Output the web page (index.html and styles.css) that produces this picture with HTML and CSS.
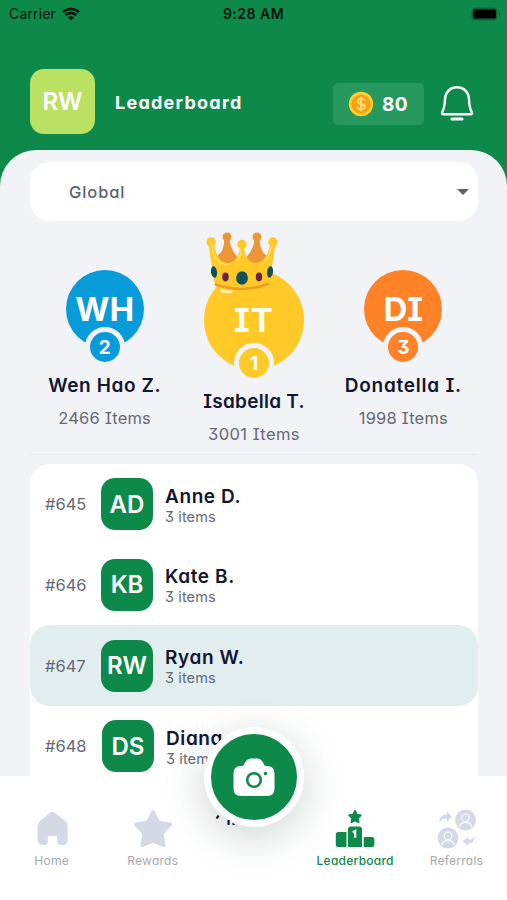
FILE: index.html
```html
<!DOCTYPE html>
<html lang="en">
<head>
<meta charset="utf-8">
<title>Leaderboard</title>
<link rel="stylesheet" href="styles.css">
</head>
<body>
<div class="app">
  <div class="status">
    <div class="carrier"><span class="carrier-name">Carrier</span>
      <svg width="18" height="14" viewBox="0 0 18 14" fill="none" stroke="#04150c" stroke-width="2.5"><path d="M1 5.200C5.500.8 12.500.8 17 5.200M3.800 8.200c3-2.800 7.400-2.800 10.400 0"/><path d="M9 13.500 5.900 10.400c1.800-1.600 4.400-1.600 6.200 0z" fill="#04150c" stroke="none"/></svg>
    </div>
    <span class="time">9:28 AM</span>
    <svg class="battery" width="30" height="14" viewBox="0 0 30 14"><rect x=".5" y=".5" width="26" height="13" rx="4" fill="#08663a"/><rect x="2.500" y="2.500" width="22.500" height="9" rx="2" fill="#000"/><path d="M28 4.700q2 2.300 0 4.600z" fill="#08663a"/></svg>
  </div>
  <header class="header">
    <div class="me">RW</div>
    <h1 class="title">Leaderboard</h1>
    <div class="coins">
      <svg width="26" height="26" viewBox="0 0 26 26"><circle cx="13" cy="13" r="12.200" fill="#ffd02f"/><circle cx="13" cy="13" r="9.600" fill="#ff9f0b"/><path d="M16.500 9.700c-.5-1.500-2-2-3.500-2-2 0-3.500.9-3.500 2.600 0 3.800 7.200 1.700 7.200 5.300 0 1.800-1.500 2.800-3.700 2.800-2 0-3.400-.8-3.900-2.300M13 5.700v14.600" fill="none" stroke="#ffe17a" stroke-width="1.900"/></svg>
      <span class="coin-count">80</span>
    </div>
    <svg class="bell" width="34" height="38" viewBox="0 0 34 38" fill="none" stroke="#fff" stroke-width="2.400" stroke-linecap="round" stroke-linejoin="round"><path d="M17 2.200C10 2.200 5.400 7.200 5 14c-.4 7-.3 8.500-2.700 13-.7 1.400-.2 2.300 1.300 2.300h26.800c1.500 0 2-.9 1.300-2.300C29.300 22.500 29.400 21 29 14 28.600 7.200 24 2.200 17 2.200z"/><path d="M12 34h10" stroke-width="3"/></svg>
  </header>
  <main class="panel">
    <div class="select"><span class="select-text">Global</span><i class="caret"></i></div>
    <section class="podium">
      <div class="place blue">
        <div class="disc">WH<span class="medal">2</span></div>
        <div class="pname">Wen Hao Z.</div><div class="pitems">2466 Items</div>
      </div>
      <div class="place gold">
        <div class="disc"><span class="it">IT</span><span class="medal">1</span>
          <svg class="crown" width="72" height="64" viewBox="0 0 72 64">
            <g fill="#ed9636"><circle cx="21" cy="5" r="4.500"/><circle cx="51" cy="5" r="4.500"/><path d="M18.500 7h5q1 13 12.500 22l-2 8H10l1-13q7-4 7.500-17zM48.500 7h5q.5 13 7.500 17l1 13H36v-8q11.500-9 12.500-22z"/></g>
            <g fill="#ffca28"><circle cx="5.200" cy="10" r="4.700"/><circle cx="66.800" cy="10" r="4.700"/><circle cx="36" cy="12.500" r="4.700"/><path d="M2.500 12.500h5.500C10 24 15 31 22.500 31c7-1 11-7 11.500-17h4C38.500 24 42 30 49 31c8 0 13-7 15-18.500h5.500L63 54q-27 10-54 0z"/></g>
            <path d="M6 14c2 15 8 20 18 18M35.500 17c-.5 7-2.500 10-5.500 12M65 15c-1 7-4 12-7 15" fill="none" stroke="#ffe15c" stroke-width="1.500"/>
            <path d="M10 52.500q26 9 52-.5" fill="none" stroke="#f09a20" stroke-width="2.500" stroke-linecap="round"/>
            <path d="M15 58.500q5 2 10 1" fill="none" stroke="#fff1a0" stroke-width="3" stroke-linecap="round"/>
            <g fill="#14505a"><ellipse cx="8" cy="40" rx="3" ry="5.800" transform="rotate(-8 8 40)"/><ellipse cx="64" cy="40" rx="3" ry="5.800" transform="rotate(8 64 40)"/><ellipse cx="36" cy="46" rx="5.900" ry="6.800"/></g>
            <g fill="#692148"><ellipse cx="19.500" cy="45" rx="3.200" ry="4.400"/><ellipse cx="53" cy="45" rx="3.200" ry="4.400"/></g>
          </svg>
        </div>
        <div class="pname">Isabella T.</div><div class="pitems">3001 Items</div>
      </div>
      <div class="place orange">
        <div class="disc">DI<span class="medal">3</span></div>
        <div class="pname">Donatella I.</div><div class="pitems">1998 Items</div>
      </div>
    </section>
    <section class="list">
      <div class="row"><span class="rank">#645</span><span class="avatar">AD</span><div class="who"><div class="name">Anne D.</div><div class="items">3 items</div></div></div>
      <div class="row"><span class="rank">#646</span><span class="avatar">KB</span><div class="who"><div class="name">Kate B.</div><div class="items">3 items</div></div></div>
      <div class="row current"><span class="rank">#647</span><span class="avatar">RW</span><div class="who"><div class="name">Ryan W.</div><div class="items">3 items</div></div></div>
      <div class="row last"><span class="rank">#648</span><span class="avatar">DS</span><div class="who"><div class="name">Diana</div><div class="items">3 items</div></div></div>
    </section>
  </main>
  <nav class="nav">
    <div class="tab"><svg width="40" height="40" viewBox="0 0 40 40"><path d="M17.300 4.200q3-2.200 6 0l9.500 7.200q2.900 2.300 2.900 6V31q0 5-5 5h-2q-3.500 0-3.500-3.500v-5.500h-9.400v5.500q0 3.500-3.500 3.500h-1.600q-5 0-5-5V17.400q0-3.700 2.900-6z" fill="#d5d9e7"/></svg><span>Home</span></div>
    <div class="tab"><svg width="40" height="40" viewBox="0 0 40 40"><path d="M20 2.500 25.500 13 37.500 15.300 29.200 24.700 31 36.500 20 32.200 9 36.500 10.800 24.700 2.500 15.300 14.500 13z" fill="#d5d9e7" stroke="#d5d9e7" stroke-width="3" stroke-linejoin="round"/></svg><span>Rewards</span></div>
    <div class="tab"></div>
    <div class="tab active"><svg width="40" height="40" viewBox="0 0 40 40" fill="#0d8a4a"><path d="m20 2 1.700 3.700 4 .5-2.900 2.900.7 4.100L20 11.300l-3.500 1.900.7-4.100-2.900-2.900 4-.5z" stroke="#0d8a4a" stroke-width="2" stroke-linejoin="round"/><path d="M13 20.500q0-3 3-3h8q3 0 3 3V38H13z"/><path d="M.8 25.500q0-2.500 2.500-2.500h8.200v15H3.300Q.8 38 .8 35.500zM28.700 28h8.200q2.500 0 2.500 2.500v5q0 2.500-2.500 2.500h-8.200z"/><path d="m17.800 23.500 2.400-1.500v6.800" fill="none" stroke="#fff" stroke-width="2.200"/></svg><span>Leaderboard</span></div>
    <div class="tab"><svg width="40" height="40" viewBox="0 0 40 40"><g fill="#d5d9e7"><circle cx="29.500" cy="11" r="10.500"/><circle cx="12" cy="29" r="10.500"/><path d="M3 14q.5-8.500 8-8.500V2.500l5 5-5 5V9.500Q6 9 3 14zM39 27q-.5 7.500-6.500 7.500V37l-6-4.500 6-5V30.500Q36.500 31 39 27z"/></g><g fill="none" stroke="#f4f5f9" stroke-width="1.300"><circle cx="29.500" cy="8.800" r="3.800"/><path d="M23.500 18q0-4.500 6-4.500t6 4.500"/><circle cx="12" cy="26.800" r="3.800"/><path d="M6 36q0-4.500 6-4.500t6 4.500"/></g></svg><span>Referrals</span></div>
  </nav>
  <button class="fab" aria-label="Camera">
    <svg width="44" height="40" viewBox="0 0 44 40"><path d="M9 9h2l3-5q1.500-2.500 4.500-2.500h7Q28.500 1.500 30 4l3 5h2q7.500 0 7.500 7.500v15Q42.500 39 35 39H9q-7.500 0-7.500-7.500v-15Q1.500 9 9 9z" fill="#fff"/><circle cx="22" cy="23" r="6.800" fill="none" stroke="#0d8a4a" stroke-width="2.600"/><circle cx="33.500" cy="16.500" r="1.800" fill="#0d8a4a"/></svg>
  </button>
  <svg class="peek" width="26" height="14" viewBox="0 0 26 14" fill="#111522"><path d="m2.500 3 2 1-1.800 3-2-.8zM12.500 8h2.300l-.3 5h-2zM17.500 10.500l3 2.500h-3z"/></svg>
</div>
</body>
</html>
```
FILE: styles.css
```css
* { box-sizing: border-box; }
body {
  margin: 0;
  font-family: Inter, "Noto Sans", sans-serif;
  font-feature-settings: "cv08", "cv11", "cv09";
  color: #121630;
}
.app { position: relative; width: 507px; height: 900px; overflow: hidden; background: linear-gradient(#0d8a4a 300px, #fff 300px); }
.status {
  height: 27px; padding: 0 6px 0 9px;
  display: grid; grid-template-columns: 1fr auto 1fr; align-items: center;
  font-size: 14px; color: #04150c; font-feature-settings: normal;
}
.carrier { display: flex; align-items: center; gap: 6px; }
.carrier-name { letter-spacing: .15px; }
.time { font-weight: 600; letter-spacing: .5px; margin-left: -3px; }
.battery { justify-self: end; }
.header { height: 123px; padding: 42px 33px 16px 30px; display: flex; align-items: center; }
.me {
  width: 65px; height: 65px; border-radius: 14px; background: #bae162; color: #fff;
  font-size: 24px; font-weight: 600; display: grid; place-items: center;
}
.title { margin: 2px 0 0 20px; font-size: 18px; font-weight: 700; letter-spacing: 1.250px; color: #fff; }
.coins {
  width: 91px; height: 42px; margin-left: auto; padding-left: 15px; margin-top: 4px;
  display: flex; align-items: center; gap: 8px; border-radius: 5px; background: #27995f; color: #fff;
}
.coin-count { font-size: 19px; font-weight: 700; letter-spacing: .5px; margin-top: 2px; }
.bell { margin: 4px 0 0 16px; }
.panel { height: 626px; padding: 12px 29px 0 30px; background: #f1f3f7; border-radius: 36px 36px 0 0; overflow: hidden; }
.select {
  height: 59px; border-radius: 20px; background: #fff; padding: 0 9px 0 39px;
  display: flex; align-items: center; justify-content: space-between;
  font-size: 16.500px; font-weight: 500; letter-spacing: .9px; color: #5d616b;
}
.caret { border: 6px solid transparent; border-top-color: #5f6063; border-bottom: 0; }
.podium { height: 234px; display: grid; grid-template-columns: repeat(3, 1fr); text-align: center; border-bottom: 1px solid #e9ebef; }
.place { padding-top: 49px; }
.disc {
  position: relative; width: 78px; height: 78px; margin: 0 auto; border-radius: 50%;
  display: grid; place-items: center; font-size: 33px; font-weight: 700; color: #fff; background: var(--tone);
}
.medal {
  position: absolute; left: 50%; bottom: -19px; transform: translateX(-50%);
  width: 40px; height: 40px; border: 5px solid #f1f3f7; border-radius: 50%;
  background: var(--tone); display: grid; place-items: center; font-size: 19px; font-weight: 700;
}
.blue { --tone: #089bd9; }
.gold { --tone: #ffc928; }
.orange { --tone: #ff8228; }
.gold .disc { width: 100px; height: 100px; }
.gold .medal { bottom: -13px; }
.it { letter-spacing: 1px; }
.crown { position: absolute; left: 2px; top: -38px; }
.pname { margin-top: 26px; font-size: 19px; line-height: 24px; font-weight: 600; white-space: nowrap; letter-spacing: .6px; }
.gold .pname { margin-top: 20px; letter-spacing: .25px; }
.orange .pname { letter-spacing: .75px; }
.pitems { margin-top: 8px; font-size: 16.500px; line-height: 24px; letter-spacing: .15px; color: #656974; }
.gold .pitems { letter-spacing: .4px; }
.list { margin-top: 9px; border-radius: 20px 20px 0 0; background: #fff; }
.row { height: 80.670px; padding-left: 15px; display: flex; align-items: center; }
.current { background: #e1edef; border-radius: 20px; }
.rank { width: 56px; font-size: 16.500px; color: #656974; }
.avatar {
  width: 52px; height: 52px; border-radius: 14px; background: #0d8a4a; color: #fff;
  display: grid; place-items: center; font-size: 24px; font-weight: 600;
}
.who { margin-left: 12px; }
.name { position: relative; top: 2px; font-size: 19px; line-height: 24px; font-weight: 600; letter-spacing: .6px; }
.items { font-size: 14.500px; line-height: 19px; color: #656974; letter-spacing: .1px; }
.last .avatar { margin-left: 1px; }
.nav {
  height: 124px; padding: 33px 0 0 1px; background: #fff;
  display: grid; grid-template-columns: repeat(5, 1fr);
}
.tab { display: flex; flex-direction: column; align-items: center; gap: 3px; font-size: 12px; line-height: 17px; letter-spacing: .25px; color: #a6aaae; }
.active { color: #0d8a4a; font-weight: 500; }
.fab {
  position: absolute; left: 204px; top: 727px; width: 100px; height: 100px; padding: 0;
  border: 7px solid #fff; border-radius: 50%; background: #0d8a4a;
  display: grid; place-items: center; box-shadow: 0 10px 42px rgba(20, 75, 60, .22);
}
.peek { position: absolute; left: 215px; top: 812px; }
```
